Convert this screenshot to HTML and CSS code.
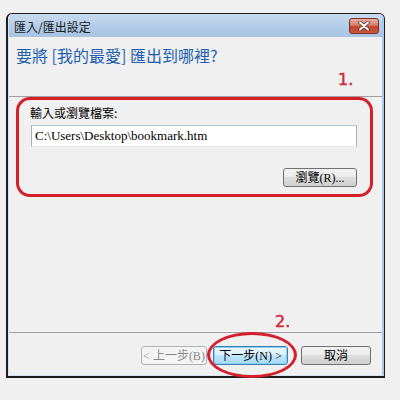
FILE: index.html
```html
<!DOCTYPE html>
<html lang="zh-Hant">
<head>
    <meta charset="UTF-8">
    <title>匯入/匯出設定</title>
    <link rel="stylesheet" href="styles.css">
</head>
<body>
    <div class="window">
        <div class="frame">
            <div class="titlebar">
                <span class="title">匯入/匯出設定</span>
                <div class="close">
                    <svg width="14" height="10" viewBox="0 0 14 10">
                        <path d="M3 1.5 L11 8.5 M11 1.5 L3 8.5" stroke="#5a2018" stroke-width="3.6" stroke-linecap="round"/>
                        <path d="M3 1.5 L11 8.5 M11 1.5 L3 8.5" stroke="#fff" stroke-width="2.2" stroke-linecap="round"/>
                    </svg>
                </div>
            </div>

            <div class="heading">要將 [我的最愛] 匯出到哪裡?</div>
            <div class="sep"></div>

            <div class="panel">
                <label class="field-label" for="path">輸入或瀏覽檔案:</label>
                <input class="path" id="path" type="text" value="C:\Users\Desktop\bookmark.htm">
                <div class="browse-row">
                    <button class="btn browse">瀏覽(R)...</button>
                </div>
            </div>
            <div class="sep"></div>

            <div class="footer">
                <button class="btn back" disabled>&lt; 上一步(B)</button>
                <button class="btn next">下一步(N) &gt;</button>
                <button class="btn cancel">取消</button>
            </div>
        </div>

        <!-- 標註 -->
        <div class="mark mark-one">1.</div>
        <div class="ring box"></div>
        <div class="mark mark-two">2.</div>
        <div class="ring oval"></div>
    </div>
</body>
</html>
```

FILE: styles.css
```css
body {
    margin: 0;
    padding: 13px 0 0 6px;
    background-color: #f0f0f0;
    font-family: "Noto Sans CJK TC", "Liberation Sans", sans-serif;
    font-size: 12px;
    color: #000;
}

.window {
    position: relative;
    width: 376px;
    height: 362px;
    border: 2px solid #1c1c1c;
    border-top-width: 1px;
    border-right-width: 1px;
    border-radius: 6px 6px 0 0;
    background-color: #f0f0f0;
}

.frame {
    height: 100%;
    box-sizing: border-box;
    border-left: 1px solid #d4e4f4;
    border-right: 2px solid #a9c9ea;
    border-bottom: 1px solid #d4e4f4;
    border-radius: 5px 5px 0 0;
    display: flex;
    flex-direction: column;
}

.titlebar {
    height: 23px;
    flex: none;
    display: flex;
    align-items: center;
    justify-content: space-between;
    padding: 0 3px 0 5px;
    background: linear-gradient(#c9dcef, #b2cbe7 55%, #a8c4e3);
    border-radius: 5px 5px 0 0;
}

.title {
    font-size: 12px;
    line-height: 16px;
    padding-top: 2px;
    color: #1a1a1a;
}

.close {
    width: 28px;
    height: 14px;
    border: 1px solid #7b2f26;
    border-radius: 3px;
    display: flex;
    align-items: center;
    justify-content: center;
    background: linear-gradient(#e7b0a4, #d47c6c 45%, #c2452f 55%, #c8573c);
}

.heading {
    height: 59px;
    flex: none;
    box-sizing: border-box;
    padding: 7px 0 0 7px;
    font-size: 16px;
    line-height: 22px;
    color: #1f5fb0;
}

.sep {
    height: 1px;
    flex: none;
    background-color: #a0a0a0;
}

.panel {
    height: 235px;
    flex: none;
    box-sizing: border-box;
    padding: 8px 25px 0 21px;
    display: flex;
    flex-direction: column;
}

.field-label {
    line-height: 16px;
}

.path {
    margin: 4px 0 0 1px;
    height: 22px;
    box-sizing: border-box;
    border: 1px solid #abadb3;
    border-top-color: #b7c5d3;
    border-bottom-color: #e3e9ef;
    padding: 0 3px;
    font-family: "Liberation Serif", "Noto Sans CJK TC", serif;
    font-size: 13px;
    color: #000;
    background-color: #fff;
}

.browse-row {
    display: flex;
    justify-content: flex-end;
    margin-top: 21px;
}

.btn {
    height: 19px;
    box-sizing: border-box;
    padding: 0;
    border: 1px solid #707070;
    border-radius: 3px;
    background: linear-gradient(#f2f2f2, #ebebeb 50%, #dddddd 50%, #cfcfcf);
    font-family: "Liberation Serif", "Noto Sans CJK TC", serif;
    font-size: 12px;
    line-height: 16px;
    color: #000;
}

.browse {
    width: 74px;
}

.footer {
    flex: 1;
    display: flex;
    justify-content: flex-end;
    align-items: flex-start;
    padding: 13px 11px 0 0;
}

.back {
    width: 66px;
    border-color: #adb2b5;
    background: #f4f4f4;
    color: #8a8a8a;
}

.next {
    width: 75px;
    margin-left: 6px;
    border-color: #3c7fb1;
    background: linear-gradient(#eaf6fd, #d9f0fc 50%, #bee6fd 50%, #a7d9f5);
    box-shadow: inset 0 0 0 1px #8fd0f2;
}

.cancel {
    width: 70px;
    margin-left: 13px;
}

.mark {
    position: absolute;
    font-family: "DejaVu Sans", sans-serif;
    font-size: 16px;
    line-height: 16px;
    -webkit-text-stroke: 0.5px #d3283a;
    color: #d3283a;
}

.mark-one {
    left: 330px;
    top: 58px;
}

.mark-two {
    left: 267px;
    top: 300px;
}

.ring {
    position: absolute;
    box-sizing: border-box;
    border: 3px solid #d3202c;
}

.box {
    left: 8px;
    top: 83px;
    width: 357px;
    height: 100px;
    border-radius: 14px;
}

.oval {
    left: 199px;
    top: 318px;
    width: 90px;
    height: 46px;
    border-radius: 50%;
}
```
